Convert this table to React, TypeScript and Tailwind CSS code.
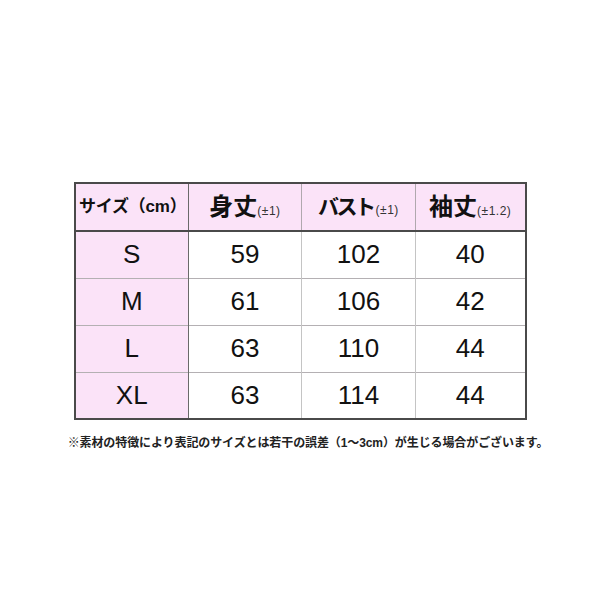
const rows = [
  { size: 'S', length: '59', bust: '102', sleeve: '40' },
  { size: 'M', length: '61', bust: '106', sleeve: '42' },
  { size: 'L', length: '63', bust: '110', sleeve: '44' },
  { size: 'XL', length: '63', bust: '114', sleeve: '44' },
];

const font = "font-['Liberation_Sans','Noto_Sans_CJK_JP',sans-serif]";

export default function App() {
  return (
    <div className={`w-[600px] h-[600px] bg-white pt-[182px] text-[#111] ${font}`}>
      <table className="mx-auto w-[453px] border-collapse border-2 border-[#4a4a4a] table-fixed">
        <thead>
          <tr className="h-[48px] bg-[#fbe3f8] border-b-2 border-[#4a4a4a]">
            <th className="w-[114px] border-r border-[#6a6a6a] text-[17px] font-bold tracking-[-0.2px] whitespace-nowrap pl-[2px]">
              サイズ（cm）
            </th>
            <th className="w-[113px] border-r border-[#b0a8ae] font-bold whitespace-nowrap">
              <span className="text-[24px]">身丈</span>
              <span className="text-[12px] font-normal tracking-[0.5px] text-[#333]">(±1)</span>
            </th>
            <th className="w-[114px] border-r border-[#b0a8ae] font-bold whitespace-nowrap">
              <span className="text-[21px] tracking-[-2.5px]">バスト</span>
              <span className="text-[12px] font-normal tracking-[0.5px] pl-[2px] text-[#333]">(±1)</span>
            </th>
            <th className="font-bold whitespace-nowrap">
              <span className="text-[24px]">袖丈</span>
              <span className="text-[12px] font-normal tracking-[0.5px] text-[#333]">(±1.2)</span>
            </th>
          </tr>
        </thead>
        <tbody>
          {rows.map((r, i) => (
            <tr key={r.size} className={`h-[47px] text-[26px] text-center ${i < rows.length - 1 ? 'border-b border-[#b4b0b3]' : ''}`}>
              <td className="bg-[#fbe3f8] border-r border-[#6a6a6a]">{r.size}</td>
              <td className="border-r border-[#c4c4c4]">{r.length}</td>
              <td className="border-r border-[#c4c4c4]">{r.bust}</td>
              <td>{r.sleeve}</td>
            </tr>
          ))}
        </tbody>
      </table>
      <p className="mt-[14px] pl-[16px] text-center text-[12px] font-bold text-[#222] whitespace-nowrap tracking-[-0.1px]">
        ※素材の特徴により表記のサイズとは若干の誤差（1～3cm）が生じる場合がございます。
      </p>
    </div>
  );
}
